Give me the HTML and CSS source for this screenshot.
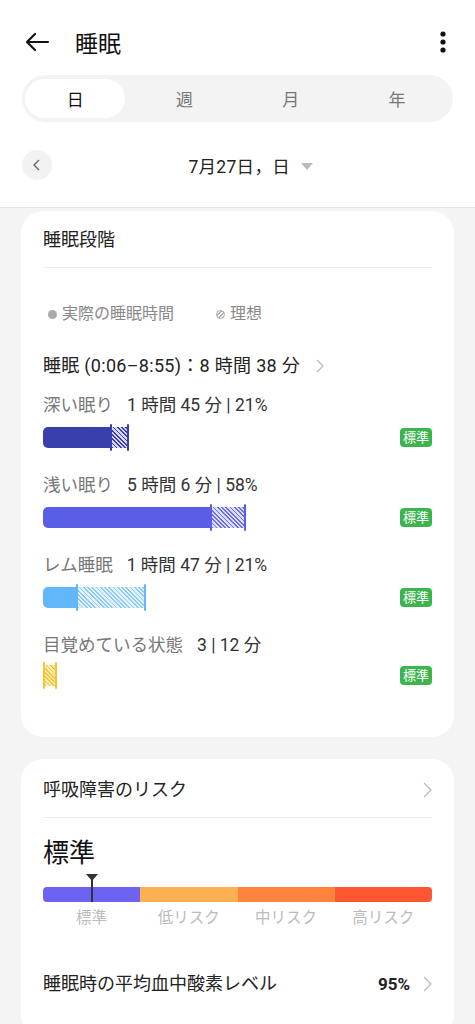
FILE: index.html
```html
<!DOCTYPE html>
<html lang="ja">
<head>
    <meta charset="utf-8">
    <title>睡眠</title>
    <link rel="stylesheet" href="styles.css">
</head>
<body>
    <header class="top">
        <div class="topbar">
            <svg class="back" width="26" height="20" viewBox="0 0 26 20">
                <path d="M24 10H3M11 2L3 10l8 8" fill="none" stroke="#111" stroke-width="2.2" stroke-linecap="round" stroke-linejoin="round"/>
            </svg>
            <h1>睡眠</h1>
            <svg class="more" width="8" height="24" viewBox="0 0 8 24">
                <circle cx="4" cy="4" r="2.6" fill="#111"/>
                <circle cx="4" cy="12" r="2.6" fill="#111"/>
                <circle cx="4" cy="20" r="2.6" fill="#111"/>
            </svg>
        </div>

        <nav class="tabs">
            <span class="tab active">日</span>
            <span class="tab">週</span>
            <span class="tab">月</span>
            <span class="tab">年</span>
        </nav>

        <div class="daterow">
            <span class="prev">
                <svg width="10" height="12" viewBox="0 0 10 12"><path d="M7 1L2 6l5 5" fill="none" stroke="#666" stroke-width="1.4"/></svg>
            </span>
            <span class="date">7月27日，日 <i class="caret"></i></span>
        </div>
    </header>

    <main>
        <section class="card">
            <h2 class="card-title">睡眠段階</h2>

            <div class="legend">
                <span class="key"><i class="dot"></i>実際の睡眠時間</span>
                <span class="key"><i class="dot ideal"></i>理想</span>
            </div>

            <div class="summary">
                睡眠 (0:06–8:55)：8 時間 38 分
                <svg class="chev" width="8" height="14" viewBox="0 0 8 14"><path d="M1 1l6 6-6 6" fill="none" stroke="#bbb" stroke-width="1.3"/></svg>
            </div>

            <div class="stage deep">
                <p><span class="name">深い眠り</span>1 時間 45 分 | 21%</p>
                <div class="barrow">
                    <div class="bar">
                        <span class="solid" style="width: 67px"></span>
                        <span class="tick"></span>
                        <span class="hatch" style="width: 15px"></span>
                        <span class="tick"></span>
                    </div>
                    <span class="badge">標準</span>
                </div>
            </div>

            <div class="stage light">
                <p><span class="name">浅い眠り</span>5 時間 6 分 | 58%</p>
                <div class="barrow">
                    <div class="bar">
                        <span class="solid" style="width: 167px"></span>
                        <span class="tick"></span>
                        <span class="hatch" style="width: 32px"></span>
                        <span class="tick"></span>
                    </div>
                    <span class="badge">標準</span>
                </div>
            </div>

            <div class="stage rem">
                <p><span class="name">レム睡眠</span>1 時間 47 分 | 21%</p>
                <div class="barrow">
                    <div class="bar">
                        <span class="solid" style="width: 33px"></span>
                        <span class="tick"></span>
                        <span class="hatch" style="width: 66px"></span>
                        <span class="tick"></span>
                    </div>
                    <span class="badge">標準</span>
                </div>
            </div>

            <div class="stage awake">
                <p><span class="name">目覚めている状態</span>3 | 12 分</p>
                <div class="barrow">
                    <div class="bar">
                        <span class="tick"></span>
                        <span class="hatch" style="width: 10px"></span>
                        <span class="tick"></span>
                    </div>
                    <span class="badge">標準</span>
                </div>
            </div>
        </section>

        <section class="card risk">
            <div class="card-title row">
                呼吸障害のリスク
                <svg class="chev" width="9" height="16" viewBox="0 0 9 16"><path d="M1 1l7 7-7 7" fill="none" stroke="#bbb" stroke-width="1.3"/></svg>
            </div>

            <div class="level">標準</div>

            <div class="gauge">
                <span class="marker"></span>
                <div class="scale">
                    <span class="seg s1"></span>
                    <span class="seg s2"></span>
                    <span class="seg s3"></span>
                    <span class="seg s4"></span>
                </div>
                <div class="scale-labels">
                    <span>標準</span>
                    <span>低リスク</span>
                    <span>中リスク</span>
                    <span>高リスク</span>
                </div>
            </div>

            <div class="oxygen">
                <span>睡眠時の平均血中酸素レベル</span>
                <span class="value">95%
                    <svg class="chev" width="9" height="16" viewBox="0 0 9 16"><path d="M1 1l7 7-7 7" fill="none" stroke="#bbb" stroke-width="1.3"/></svg>
                </span>
            </div>
        </section>
    </main>
</body>
</html>
```

FILE: styles.css
```css
* {
    box-sizing: border-box;
}
body {
    margin: 0;
    background: #f4f4f4;
    color: #222;
    font-family: Roboto, "Noto Sans CJK JP", sans-serif;
}
p, h1, h2 {
    margin: 0;
    font-weight: normal;
}

/* header */
.top {
    background: #fff;
    border-bottom: solid 1px #e6e6e6;
    height: 208px;
}
.topbar {
    height: 75px;
    padding: 8px 28px 0 24px;
    display: flex;
    align-items: center;
}
.topbar h1 {
    font-size: 23px;
    margin-left: 25px;
    flex: 1;
    color: #111;
}
.tabs {
    margin: 0 22px;
    height: 47px;
    padding: 4px 3px;
    border-radius: 24px;
    background: #f3f3f3;
    display: grid;
    grid-template-columns: repeat(4, 1fr);
}
.tab {
    display: flex;
    align-items: center;
    justify-content: center;
    font-size: 17px;
    color: #777;
}
.tab.active {
    background: #fff;
    border-radius: 20px;
    color: #111;
    margin-right: 6px;
}

.daterow {
    height: 86px;
    padding: 0 22px;
    display: flex;
    align-items: center;
}
.prev {
    width: 30px;
    height: 30px;
    border-radius: 50%;
    background: #f2f2f2;
    display: flex;
    align-items: center;
    justify-content: center;
}
.date {
    flex: 1;
    text-align: center;
    font-size: 17.5px;
    letter-spacing: 0.3px;
    color: #222;
    padding-right: 34px;
    padding-left: 30px;
}
.caret {
    display: inline-block;
    width: 0;
    height: 0;
    margin-left: 6px;
    border-left: 6px solid transparent;
    border-right: 6px solid transparent;
    border-top: 7px solid #bbb;
    vertical-align: 3px;
}

/* cards */
main {
    padding: 3px 21px 0;
}
.card {
    background: #fff;
    border-radius: 22px;
    padding: 17px 22px 49px;
    margin-bottom: 22px;
}
.card-title {
    font-size: 18px;
    line-height: 24px;
    padding-bottom: 15px;
    border-bottom: solid 1px #eee;
    color: #222;
}
.row {
    display: flex;
    align-items: center;
    justify-content: space-between;
    padding-bottom: 15px;
}
.chev {
    display: inline-block;
}

.legend {
    margin-top: 36px;
    display: flex;
    gap: 37px;
    font-size: 16px;
    line-height: 20px;
    color: #888;
}
.key {
    display: flex;
    align-items: center;
}
.dot {
    width: 9px;
    height: 9px;
    border-radius: 50%;
    background: #aaa;
    margin: 0 5px 0 5px;
}
.dot.ideal {
    background: repeating-linear-gradient(135deg, #aaa 0 1.3px, #fff 1.3px 2.6px);
    border: solid 1px #aaa;
}

.summary {
    margin-top: 30px;
    font-size: 18px;
    line-height: 24px;
    letter-spacing: 0.3px;
    color: #222;
    display: flex;
    align-items: center;
    gap: 16px;
}

/* sleep stages */
.stage {
    margin-top: 15px;
}
.stage + .stage {
    margin-top: 22px;
}
.stage p {
    font-size: 17.5px;
    line-height: 24px;
    color: #333;
}
.name {
    color: #777;
    margin-right: 14px;
}
.barrow {
    margin-top: 6px;
    height: 28px;
    display: flex;
    align-items: center;
    justify-content: space-between;
}
.bar {
    display: flex;
    align-items: center;
}
.solid {
    height: 21px;
    border-radius: 5px 0 0 5px;
}
.tick {
    width: 2px;
    height: 27px;
    border-radius: 1px;
}
.hatch {
    height: 21px;
}
.badge {
    background: #3cb54e;
    color: #fff;
    font-size: 13px;
    line-height: 19px;
    padding: 0 3px;
    border-radius: 4px;
}

.deep .solid, .deep .tick { background: #3a3fae; }
.deep .hatch { background: repeating-linear-gradient(45deg, #3a3fae 0 1.2px, #d6d7f0 1.2px 3px); }
.light .solid, .light .tick { background: #5a5ee6; }
.light .hatch { background: repeating-linear-gradient(45deg, #6a6ee8 0 1.2px, #dcddfa 1.2px 3px); }
.rem .solid, .rem .tick { background: #62b7fa; }
.rem .hatch { background: repeating-linear-gradient(45deg, #8ccaf9 0 1.2px, #e3f2fd 1.2px 3px); }
.awake .tick { background: #f9c433; }
.awake .hatch { background: repeating-linear-gradient(45deg, #f9c433 0 1.2px, #fcebb5 1.2px 3px); }
.awake .barrow { height: 26px; margin-top: 5px; }

/* breathing risk */
.risk {
    padding-top: 19px;
    padding-bottom: 40px;
}
.level {
    margin-top: 18px;
    font-size: 26px;
    line-height: 34px;
    color: #111;
}
.gauge {
    position: relative;
    margin-top: 17px;
}
.marker {
    position: absolute;
    left: 43px;
    top: -13px;
    width: 12px;
    height: 28px;
}
.marker::before {
    content: "";
    position: absolute;
    left: 0;
    top: 0;
    border-left: 6px solid transparent;
    border-right: 6px solid transparent;
    border-top: 7px solid #333;
}
.marker::after {
    content: "";
    position: absolute;
    left: 5px;
    top: 4px;
    width: 2px;
    height: 24px;
    background: #333;
}
.scale {
    display: flex;
    height: 15px;
    border-radius: 4px;
    overflow: hidden;
}
.seg {
    flex: 1;
}
.s1 { background: #6c63f3; }
.s2 { background: #fdb052; }
.s3 { background: #fe843e; }
.s4 { background: #fd5631; }
.scale-labels {
    display: flex;
    font-size: 15.5px;
    line-height: 22px;
    color: #bbb;
    margin-top: 5px;
}
.scale-labels span {
    flex: 1;
    text-align: center;
}
.oxygen {
    margin-top: 42px;
    display: flex;
    align-items: center;
    justify-content: space-between;
    font-size: 18px;
    line-height: 26px;
    color: #222;
}
.value {
    font-weight: bold;
    font-size: 17px;
    display: flex;
    align-items: center;
    gap: 13px;
}
```
